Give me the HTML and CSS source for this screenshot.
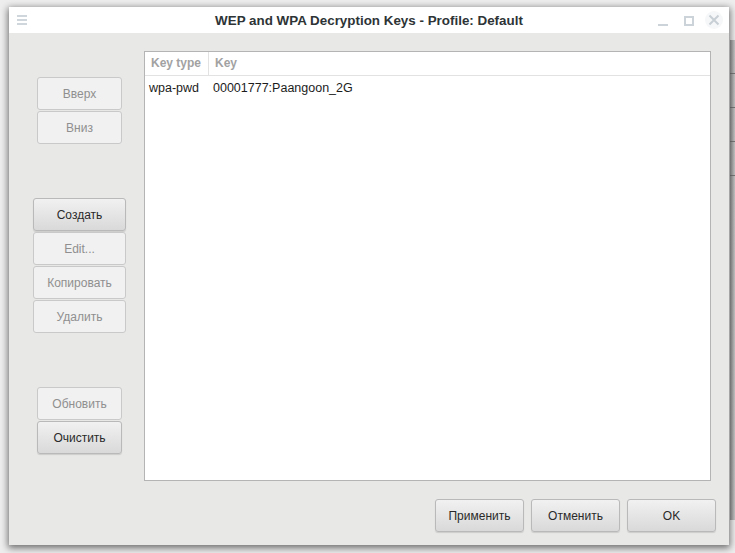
FILE: index.html
```html
<!DOCTYPE html>
<html>
<head>
<meta charset="utf-8">
<link rel="stylesheet" href="styles.css">
</head>
<body>
<div class="desktop">
  <div class="window">
    <div class="titlebar">
      <div class="menu-icon"><span></span><span></span><span></span></div>
      <div class="title">WEP and WPA Decryption Keys - Profile: Default</div>
      <div class="controls">
        <span class="ctl-min"></span>
        <span class="ctl-max"></span>
        <span class="ctl-close">
          <svg width="12" height="12" viewBox="0 0 12 12"><path d="M1.5 1.5 L10.5 10.5 M10.5 1.5 L1.5 10.5" stroke="#c8d0d6" stroke-width="2" fill="none"/></svg>
        </span>
      </div>
    </div>
    <div class="content">
      <div class="main">
        <div class="sidebar">
          <div class="group group-move">
            <button class="btn disabled narrow">Вверх</button>
            <button class="btn disabled narrow">Вниз</button>
          </div>
          <div class="group group-edit">
            <button class="btn wide">Создать</button>
            <button class="btn disabled wide">Edit...</button>
            <button class="btn disabled wide">Копировать</button>
            <button class="btn disabled wide">Удалить</button>
          </div>
          <div class="group group-refresh">
            <button class="btn disabled narrow">Обновить</button>
            <button class="btn narrow">Очистить</button>
          </div>
        </div>
        <div class="list">
          <div class="list-head">
            <div class="col col-type">Key type</div>
            <div class="col col-key">Key</div>
          </div>
          <div class="list-row">
            <div class="cell cell-type">wpa-pwd</div>
            <div class="cell cell-key">00001777:Paangoon_2G</div>
          </div>
        </div>
      </div>
      <div class="footer">
        <button class="btn foot">Применить</button>
        <button class="btn foot">Отменить</button>
        <button class="btn foot">OK</button>
      </div>
    </div>
  </div>
  <div class="behind">
    <span></span><span></span><span></span><span></span>
  </div>
</div>
</body>
</html>
```

FILE: styles.css
```css
html, body {
  margin: 0;
  padding: 0;
}
body {
  width: 735px;
  height: 553px;
  overflow: hidden;
  background: #eeeeee;
  font-family: "Liberation Sans", Arial, sans-serif;
}
.desktop {
  position: relative;
  width: 735px;
  height: 553px;
  padding: 7px 0 0 9px;
  box-sizing: border-box;
}
.window {
  width: 720px;
  height: 538px;
  display: flex;
  flex-direction: column;
  box-shadow: 0 2px 7px 1px rgba(0, 0, 0, 0.55);
  position: relative;
  z-index: 2;
}
.titlebar {
  height: 26px;
  background: #ffffff;
  display: flex;
  align-items: center;
  position: relative;
}
.menu-icon {
  position: absolute;
  left: 8px;
  top: 8px;
  display: flex;
  flex-direction: column;
  gap: 2px;
}
.menu-icon span {
  display: block;
  width: 10px;
  height: 2px;
  background: #cfd6dc;
}
.title {
  flex: 1;
  text-align: center;
  font-weight: bold;
  font-size: 13.4px;
  color: #2e3436;
}
.controls {
  position: absolute;
  right: 6px;
  top: 5px;
  display: flex;
  align-items: center;
  height: 16px;
}
.ctl-min {
  display: block;
  width: 10px;
  height: 2px;
  background: #ccd3d9;
  margin-top: 10px;
  margin-right: 16px;
}
.ctl-max {
  display: block;
  width: 6px;
  height: 6px;
  border: 2px solid #ccd3d9;
  margin-right: 11px;
  margin-top: 1px;
}
.ctl-close {
  display: flex;
  align-items: center;
  justify-content: center;
  width: 18px;
  height: 18px;
  border-radius: 50%;
  background: #f6f7f8;
}
.content {
  flex: 1;
  background: #e8e8e7;
  display: flex;
  flex-direction: column;
  padding: 18px 13px 12px 0;
}
.main {
  display: flex;
  height: 430px;
}
.sidebar {
  width: 135px;
  display: flex;
  flex-direction: column;
  flex-shrink: 0;
}
.group {
  display: flex;
  flex-direction: column;
  gap: 1px;
}
.group-move {
  margin: 26px 0 0 28px;
}
.group-edit {
  margin: 54px 0 0 24px;
}
.group-refresh {
  margin: 54px 0 0 28px;
}
.btn {
  font-family: "Liberation Sans", Arial, sans-serif;
  font-size: 12px;
  height: 33px;
  border: 1px solid #b9b9b9;
  border-radius: 3px;
  background: linear-gradient(#f1f1f1, #d9d9d9);
  color: #2a2a2a;
  padding: 0;
  box-shadow: 0 1px 1px rgba(0, 0, 0, 0.12);
}
.btn.disabled {
  background: #f1f1f1;
  border-color: #c9c9c9;
  color: #8f8f8f;
  box-shadow: none;
}
.btn.narrow {
  width: 85px;
}
.btn.wide {
  width: 93px;
}
.list {
  width: 567px;
  margin-right: 5px;
  box-sizing: border-box;
  border: 1px solid #b4b4b4;
  background: #ffffff;
  font-size: 12px;
}
.list-head {
  display: flex;
  height: 23px;
  border-bottom: 1px solid #e2e2e2;
}
.col {
  font-weight: bold;
  color: #a2a2a2;
  line-height: 23px;
  padding-left: 6px;
}
.col-type {
  width: 57px;
  border-right: 1px solid #e2e2e2;
}
.col-key {
  flex: 1;
}
.list-row {
  display: flex;
  height: 24px;
  align-items: center;
  color: #1c1c1c;
  font-size: 12.5px;
}
.cell-type {
  width: 64px;
  padding-left: 4px;
}
.cell-key {
  padding-left: 0;
}
.footer {
  display: flex;
  justify-content: flex-end;
  gap: 7px;
  margin-top: 18px;
}
.btn.foot {
  width: 89px;
}
.behind {
  position: absolute;
  right: 0;
  top: 40px;
  width: 5px;
  height: 480px;
  background: linear-gradient(90deg, #9a9a9a, #c8c8c8);
  z-index: 1;
}
.behind span {
  display: block;
  height: 1px;
  background: #7a7a7a;
  margin-top: 33px;
}
```
